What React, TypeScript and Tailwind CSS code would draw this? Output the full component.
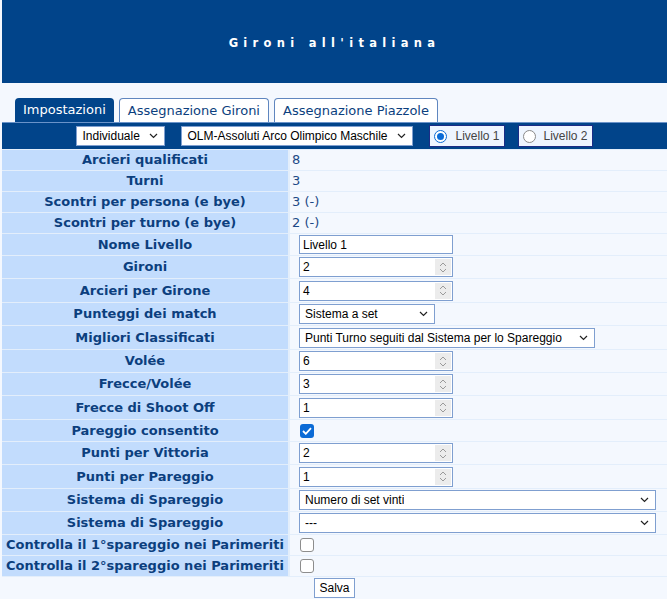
import React from "react";

const Chevron = () => (
  <svg width="9" height="6" viewBox="0 0 9 6" className="shrink-0">
    <path d="M1 1l3.5 3.5L8 1" fill="none" stroke="#222" strokeWidth="1.2" />
  </svg>
);

function Select({ value, width }: { value: string; width: string }) {
  return (
    <div
      className={`${width} h-[20px] flex items-center justify-between pl-[5px] pr-[6px] bg-white border border-[#7f9fd0] text-[12px] text-black`}
    >
      <span className="truncate">{value}</span>
      <Chevron />
    </div>
  );
}

function NumberBox({ value }: { value: string }) {
  return (
    <div className="w-[154px] h-[20px] flex items-stretch bg-white border border-[#7f9fd0] text-[12px] text-black">
      <span className="flex-1 pl-[3px] flex items-center">{value}</span>
      <div className="w-[16px] my-[1px] mr-[1px] bg-[#ececec] flex flex-col items-center justify-center gap-[1px]">
        <svg width="8" height="5" viewBox="0 0 8 5">
          <path d="M1 4l3-3 3 3" fill="none" stroke="#9a9a9a" strokeWidth="1" />
        </svg>
        <svg width="8" height="5" viewBox="0 0 8 5">
          <path d="M1 1l3 3 3-3" fill="none" stroke="#9a9a9a" strokeWidth="1" />
        </svg>
      </div>
    </div>
  );
}

function Check({ checked }: { checked?: boolean }) {
  return checked ? (
    <div className="w-[14px] h-[14px] rounded-[3px] bg-[#0b6bd6] flex items-center justify-center">
      <svg width="10" height="8" viewBox="0 0 10 8">
        <path d="M1 4l2.8 2.8L9 1.2" fill="none" stroke="#fff" strokeWidth="1.8" />
      </svg>
    </div>
  ) : (
    <div className="w-[14px] h-[14px] rounded-[3px] bg-white border border-[#8d8d8d]" />
  );
}

function Row({ label, children, h = "h-[22px]" }: { label: string; children: React.ReactNode; h?: string }) {
  return (
    <div className={`flex gap-[2px] ${h}`}>
      <div className="w-[286px] shrink-0 bg-[#c2dcfd] flex items-center justify-center font-bold text-[13px] text-[#0c3f7e] whitespace-nowrap">
        {label}
      </div>
      <div className="flex-1 bg-[#f4f8fe] flex items-center pl-[2px] text-[13px] text-[#1d4a86]">{children}</div>
    </div>
  );
}

function Field({ children }: { children: React.ReactNode }) {
  return <span className="pl-[7px] font-['Liberation_Sans',sans-serif]">{children}</span>;
}

export default function App() {
  return (
    <div className="w-[667px] h-[599px] bg-[#f4f8fe] pl-[2px] font-['DejaVu_Sans',sans-serif] overflow-hidden">
      <div className="h-[83px] pt-[4px] bg-[#01448a] flex items-center justify-center">
        <span className="text-white font-bold text-[11.5px] tracking-[5.3px]">Gironi all'italiana</span>
      </div>

      <div className="pt-[15px] pl-[13px] flex items-end gap-[5px] h-[39px] text-[13px]">
        <div className="h-[24px] px-[8px] rounded-t-[4px] bg-[#01448a] text-white flex items-center">Impostazioni</div>
        <div className="h-[24px] px-[8px] rounded-t-[4px] bg-white border border-b-0 border-[#5f86bf] text-[#0c3f7e] flex items-center">
          Assegnazione Gironi
        </div>
        <div className="h-[24px] px-[8px] rounded-t-[4px] bg-white border border-b-0 border-[#5f86bf] text-[#0c3f7e] flex items-center">
          Assegnazione Piazzole
        </div>
      </div>

      <div className="h-[27px] bg-[#01448a] border-t border-[#6a93c9] flex items-center justify-center gap-[16px] font-['Liberation_Sans',sans-serif] text-[12px]">
        <Select value="Individuale" width="w-[89px]" />
        <Select value="OLM-Assoluti Arco Olimpico Maschile" width="w-[232px]" />
        <div className="flex gap-[13px]">
          <div className="h-[22px] px-[4px] bg-[#eef5ff] border border-[#1c2c86] flex items-center gap-[8px] text-[#444]">
            <span className="w-[13px] h-[13px] rounded-full border border-[#0b6bd6] bg-white p-[2px] flex">
              <span className="flex-1 rounded-full bg-[#0b6bd6]" />
            </span>
            Livello 1
          </div>
          <div className="h-[22px] px-[4px] bg-[#eef5ff] border border-[#1c2c86] flex items-center gap-[8px] text-[#444]">
            <span className="w-[13px] h-[13px] rounded-full border border-[#8a8a8a] bg-white" />
            Livello 2
          </div>
        </div>
      </div>

      <div className="flex flex-col gap-[1px] pt-[1px] bg-[#e3eefb]">
        <Row label="Arcieri qualificati" h="h-[20px]">8</Row>
        <Row label="Turni" h="h-[20px]">3</Row>
        <Row label="Scontri per persona (e bye)" h="h-[20px]">3 (-)</Row>
        <Row label="Scontri per turno (e bye)" h="h-[20px]">2 (-)</Row>
        <Row label="Nome Livello" h="h-[21px]">
          <Field>
            <div className="w-[154px] h-[19px] bg-white border border-[#7f9fd0] pl-[3px] flex items-center text-[12px] text-black">
              Livello 1
            </div>
          </Field>
        </Row>
        <Row label="Gironi">
          <Field><NumberBox value="2" /></Field>
        </Row>
        <Row label="Arcieri per Girone" h="h-[23px]">
          <Field><NumberBox value="4" /></Field>
        </Row>
        <Row label="Punteggi dei match">
          <Field><Select value="Sistema a set" width="w-[136px]" /></Field>
        </Row>
        <Row label="Migliori Classificati" h="h-[23px]">
          <Field><Select value="Punti Turno seguiti dal Sistema per lo Spareggio" width="w-[296px]" /></Field>
        </Row>
        <Row label="Volée">
          <Field><NumberBox value="6" /></Field>
        </Row>
        <Row label="Frecce/Volée">
          <Field><NumberBox value="3" /></Field>
        </Row>
        <Row label="Frecce di Shoot Off" h="h-[23px]">
          <Field><NumberBox value="1" /></Field>
        </Row>
        <Row label="Pareggio consentito" h="h-[21px]">
          <span className="pl-[8px]"><Check checked /></span>
        </Row>
        <Row label="Punti per Vittoria">
          <Field><NumberBox value="2" /></Field>
        </Row>
        <Row label="Punti per Pareggio" h="h-[23px]">
          <Field><NumberBox value="1" /></Field>
        </Row>
        <Row label="Sistema di Spareggio">
          <Field><Select value="Numero di set vinti" width="w-[357px]" /></Field>
        </Row>
        <Row label="Sistema di Spareggio">
          <Field><Select value="---" width="w-[357px]" /></Field>
        </Row>
        <Row label="Controlla il 1°spareggio nei Parimeriti" h="h-[20px]">
          <span className="pl-[8px]"><Check /></span>
        </Row>
        <Row label="Controlla il 2°spareggio nei Parimeriti" h="h-[20px]">
          <span className="pl-[8px]"><Check /></span>
        </Row>
        <div className="h-[22px] bg-[#f4f8fe] flex items-center justify-center">
          <button className="h-[20px] px-[4px] bg-white border border-[#7f9fd0] font-['Liberation_Sans',sans-serif] text-[12px] text-black">
            Salva
          </button>
        </div>
      </div>
    </div>
  );
}
